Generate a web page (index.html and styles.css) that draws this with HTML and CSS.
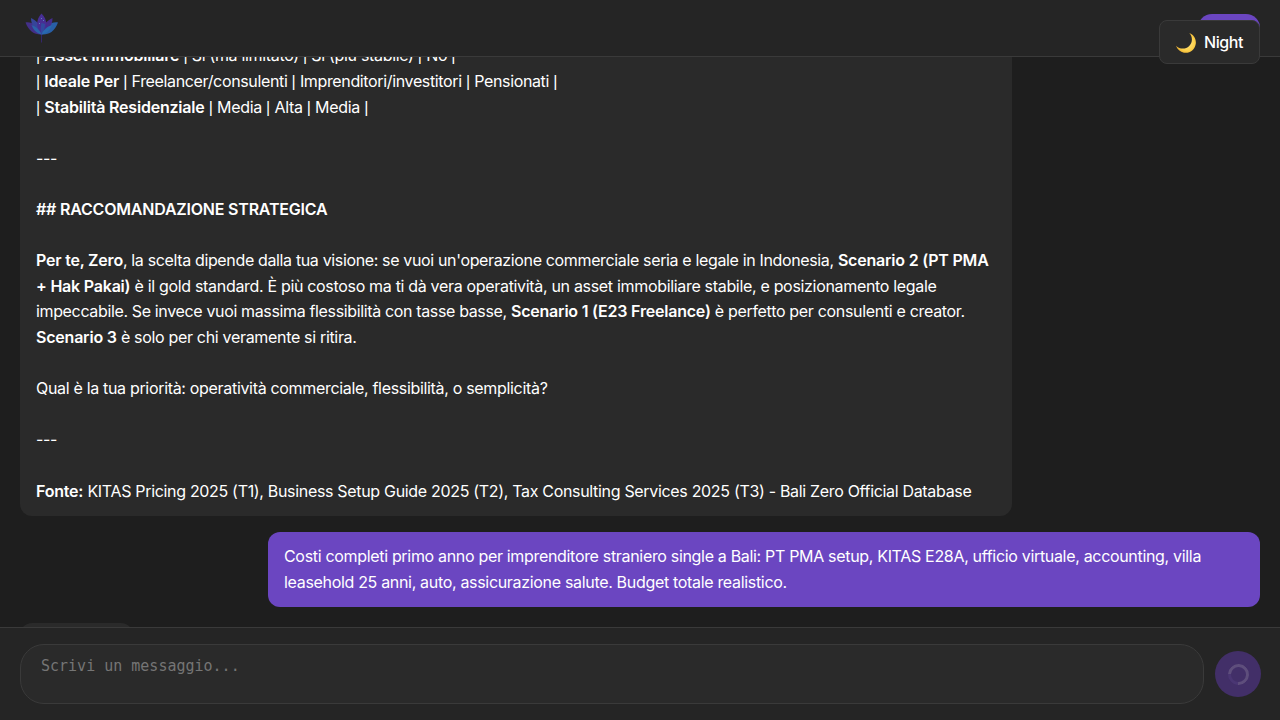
FILE: index.html
```html
<!DOCTYPE html>
<html lang="it">
<head>
<meta charset="utf-8">
<title>Chat</title>
<link rel="stylesheet" href="styles.css">
</head>
<body>
<div class="app">
  <header class="header">
    <svg class="logo" viewBox="0 0 36 32" width="36" height="32" aria-hidden="true">
      <path d="M17.500 21V29.500" stroke="#34266a" stroke-width="1"/>
      <path d="M1.500 9.500C8 8.500 15 13 17.500 21.500C11 22 5 18.500 1.500 9.500Z" fill="#432f88"/>
      <path d="M34 9.500C27 8.500 20 13 17.500 21.500C25 22 30.500 18.500 34 9.500Z" fill="#285fa6"/>
      <path d="M7 5C13.500 8 17.500 13 17.500 21.500C11 18 7 12 7 5Z" fill="#36459a"/>
      <path d="M28.500 5C22 8 17.500 13 17.500 21.500C25 18 28.500 12 28.500 5Z" fill="#462c8d"/>
      <path d="M17.500 .5C11.500 7 12 15 17.500 21.500C23.500 15 24 7 17.500 .5Z" fill="#472e94"/>
      <path d="M17.500 10C16.500 14 16.500 18 17.500 21.500C20.500 18 21 14 21 11Z" fill="#32499f"/>
      <path d="M7.500 12C12 13.500 16 17 17.500 21.500C12.500 20.500 9.500 17 7.500 12Z" fill="#2b62a9"/>
      <path d="M28 12C23 13.500 19 17 17.500 21.500C23 20.500 26 17 28 12Z" fill="#2869af"/>
      <path d="M17 5h1v1h-1zM15 10h1v1h-1zM19 7h1v1h-1z" fill="#5a7fbd"/>
    </svg>
    <div class="action"></div>
  </header>
  <main class="chat">
    <div class="bubble reply"><div><span class="bar">|</span> <b>Asset Immobiliare</b> <span class="bar">|</span> Sì (ma limitato) <span class="bar">|</span> Sì (più stabile) <span class="bar">|</span> No <span class="bar">|</span></div><div class="snug"><span class="bar">|</span> <b>Ideale Per</b> <span class="bar">|</span> Freelancer/consulenti <span class="bar">|</span> Imprenditori/investitori <span class="bar">|</span> Pensionati <span class="bar">|</span></div><div><span class="bar">|</span> <b>Stabilità Residenziale</b> <span class="bar">|</span> Media <span class="bar">|</span> Alta <span class="bar">|</span> Media <span class="bar">|</span></div><br><div>---</div><br><div><b>## RACCOMANDAZIONE STRATEGICA</b></div><br><div class="snug"><b>Per te, Zero</b>, la scelta dipende dalla tua visione: se vuoi un'operazione commerciale seria e legale in Indonesia, <b>Scenario 2 (PT PMA</b></div><div><b>+ Hak Pakai)</b> è il gold standard. È più costoso ma ti dà vera operatività, un asset immobiliare stabile, e posizionamento legale</div><div><span class="snug">impeccabile. Se invece vuoi massima flessibilità con tasse basse,</span> <b>Scenario 1 (E23 Freelance)</b> è perfetto per consulenti e creator.</div><div><b>Scenario 3</b> è solo per chi veramente si ritira.</div><br><div>Qual è la tua priorità: operatività commerciale, flessibilità, o semplicità?</div><br><div>---</div><br><div><b>Fonte:</b> KITAS Pricing 2025 (T1), Business Setup Guide 2025 (T2), Tax Consulting Services 2025 (T3) - Bali Zero Official Database</div></div>
    <div class="bubble question"><div>Costi completi primo anno per imprenditore straniero single a Bali: PT PMA setup, KITAS E28A, ufficio virtuale, accounting, villa</div><div>leasehold 25 anni, auto, assicurazione salute. Budget totale realistico.</div></div>
    <div class="bubble typing"></div>
  </main>
  <footer class="composer">
    <textarea class="input" placeholder="Scrivi un messaggio..."></textarea>
    <button class="send" aria-label="Invia"><span class="spinner"></span></button>
  </footer>
  <button class="theme">
    <svg class="moon" viewBox="0 0 20 20" width="20" height="20" aria-hidden="true">
      <defs><radialGradient id="gold" cx=".55" cy=".5" r=".6"><stop offset="0" stop-color="#ffe78a"/><stop offset=".65" stop-color="#fcd04a"/><stop offset="1" stop-color="#e8a92c"/></radialGradient></defs>
      <path d="M13.300 0C18 1.800 20.600 6.500 19.700 11.300C18.700 17 13.500 20.700 8 19.700C4.200 19 1.200 16.300 0 12.700C3.500 16.300 9.500 16.700 13.200 13C16.800 9.400 16.800 3.700 13.300 0Z" fill="url(#gold)"/>
    </svg>
    <span>Night</span>
  </button>
</div>
</body>
</html>
```
FILE: styles.css
```css
* { box-sizing: border-box; }
body {
  margin: 0;
  background: #1e1e1e;
  color: #fff;
  font: 16px/25.6px Inter, "Liberation Sans", sans-serif;
}
.app {
  position: relative;
  display: flex;
  flex-direction: column;
  height: 720px;
  overflow: hidden;
}
.header {
  flex: none;
  display: flex;
  justify-content: space-between;
  align-items: flex-start;
  height: 57px;
  padding: 13px 20px 0 24px;
  background: #252525;
  border-bottom: 1px solid #3a3a3a;
}
.logo { display: block; }
.action {
  width: 62px;
  height: 28px;
  margin-top: 1px;
  border-radius: 16px;
  background: #6b46c1;
}
.chat {
  flex: none;
  display: flex;
  flex-direction: column;
  justify-content: flex-end;
  gap: 16px;
  height: 570px;
  padding: 0 20px;
  overflow: hidden;
}
.bubble {
  flex: none;
  width: 992px;
  padding: 12px 16px;
  border-radius: 12px;
  white-space: nowrap;
  font-weight: 430;
  letter-spacing: -0.32px;
}
.bubble b {
  font-weight: 620;
  letter-spacing: -0.21px;
}
.snug { letter-spacing: -0.355px; }
.bar {
  font-family: "Liberation Sans", sans-serif;
  line-height: 1;
  letter-spacing: 0;
}
.reply { background: #2a2a2a; }
.question {
  align-self: flex-end;
  background: #6b46c1;
}
.typing {
  width: 113px;
  height: 48px;
  margin-bottom: -44.300px;
  background: #2a2a2a;
}
.composer {
  flex: 1;
  display: flex;
  align-items: center;
  gap: 11px;
  padding: 0 19px 0 20px;
  background: #252525;
  border-top: 1px solid #3a3a3a;
}
.input {
  flex: 1;
  height: 60px;
  padding: 12px 20px;
  border: 1px solid #3a3a3a;
  border-radius: 24px;
  background: #2a2a2a;
  color: #fff;
  font: 15px/18px "DejaVu Sans Mono", monospace;
  resize: none;
  outline: none;
}
.input::placeholder { color: #757575; }
.send {
  display: flex;
  align-items: center;
  justify-content: center;
  width: 46px;
  height: 46px;
  padding: 0;
  border: 0;
  border-radius: 50%;
  background: #422f68;
}
.spinner {
  width: 21px;
  height: 21px;
  border: 3px solid #5e4e7c;
  border-left-color: #4a3673;
  border-radius: 50%;
  transform: rotate(-42deg);
}
.theme {
  position: absolute;
  top: 20px;
  right: 20px;
  display: flex;
  align-items: center;
  gap: 8px;
  width: 101px;
  height: 44px;
  padding: 0 16px;
  border: 1px solid #3a3a3a;
  border-radius: 8px;
  background: #2a2a2a;
  color: #fff;
  font: 500 16px/24px Inter, sans-serif;
  letter-spacing: -0.4px;
}
.moon {
  flex: none;
  margin-top: 2px;
}
```
